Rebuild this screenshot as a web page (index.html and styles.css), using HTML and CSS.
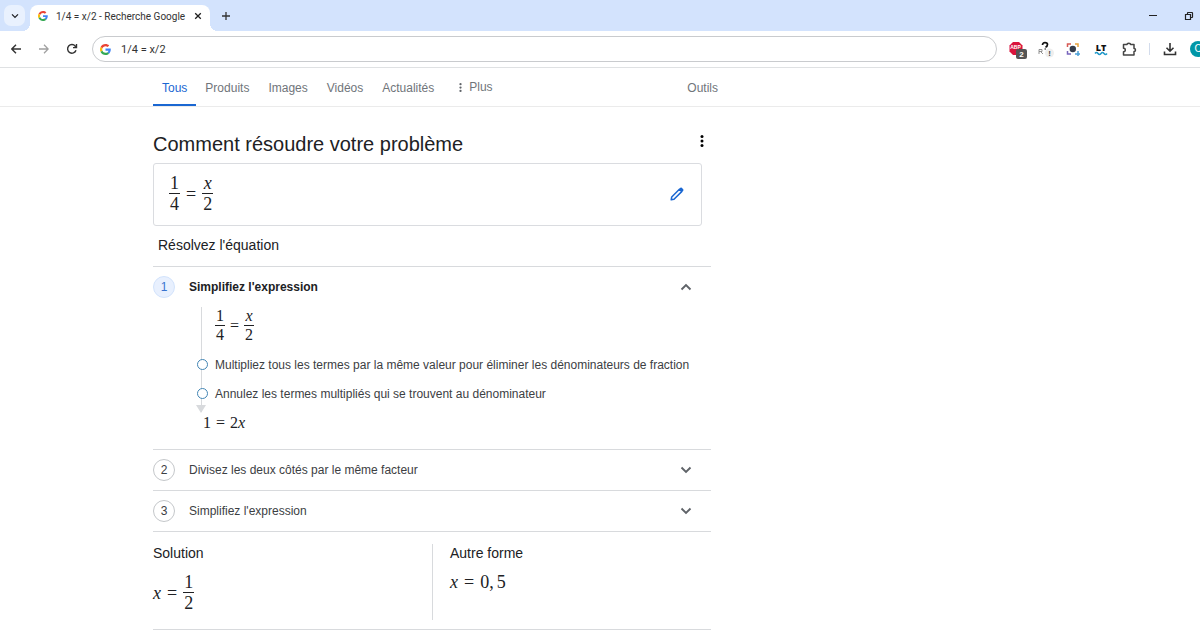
FILE: index.html
```html
<!DOCTYPE html>
<html lang="fr">
<head>
<meta charset="utf-8">
<meta name="viewport" content="width=device-width, initial-scale=1">
<title>1/4 = x/2 - Recherche Google</title>
<link rel="stylesheet" href="styles.css">
</head>
<body>
<svg class="defs" aria-hidden="true">
  <symbol id="google" viewBox="0 0 48 48">
    <path fill="#ea4335" d="M24 9.5c3.5 0 6.700 1.200 9.200 3.600l6.900-6.900C35.900 2.400 30.500 0 24 0 14.600 0 6.500 5.400 2.600 13.200l8 6.200C12.400 13.700 17.700 9.500 24 9.500z"/>
    <path fill="#4285f4" d="M47 24.500c0-1.600-.2-3.100-.4-4.500H24v9h12.900c-.6 3-2.300 5.500-4.800 7.200l7.700 6C44.400 38 47 31.800 47 24.500z"/>
    <path fill="#fbbc05" d="M10.500 28.600c-.5-1.500-.8-3-.8-4.600s.3-3.100.8-4.600l-8-6.200C.9 16.500 0 20.100 0 24s.9 7.500 2.600 10.800z"/>
    <path fill="#34a853" d="M24 48c6.500 0 11.900-2.100 15.900-5.800l-7.700-6c-2.200 1.500-4.900 2.300-8.200 2.300-6.300 0-11.600-4.200-13.500-9.900l-8 6.200C6.500 42.600 14.600 48 24 48z"/>
  </symbol>
  <symbol id="chevron" viewBox="0 0 12 8"><path d="M1.500 1.500L6 6l4.500-4.500" fill="none" stroke="currentColor" stroke-width="1.900"/></symbol>
  <symbol id="dots" viewBox="0 0 4 14"><circle cx="2" cy="2.500" r="1.500"/><circle cx="2" cy="7" r="1.500"/><circle cx="2" cy="11.500" r="1.500"/></symbol>
</svg>

<header class="browser">
  <div class="tabstrip">
    <button class="tab-search" aria-label="Rechercher dans les onglets"><svg width="8" height="6"><use href="#chevron"/></svg></button>
    <div class="tab">
      <svg width="10" height="10"><use href="#google"/></svg>
      <span class="tab-title">1/4 = x/2 - Recherche Google</span>
      <button class="plain" aria-label="Fermer l'onglet"><svg width="8" height="8" viewBox="0 0 8 8"><path d="M1.200 1.200l5.600 5.600M6.800 1.200L1.200 6.800" stroke="#1f1f1f" stroke-width="1.300"/></svg></button>
    </div>
    <button class="plain new-tab" aria-label="Nouvel onglet"><svg width="10" height="10" viewBox="0 0 10 10"><path d="M5 1v8M1 5h8" stroke="#333" stroke-width="1.300"/></svg></button>
    <div class="window-controls">
      <button class="plain" aria-label="Réduire"><svg width="8" height="8" viewBox="0 0 8 8"><path d="M0 4.500h8" stroke="#222"/></svg></button>
      <button class="plain" aria-label="Restaurer"><svg width="10" height="10" viewBox="0 0 10 10"><path d="M1.500 3.500h5v5h-5zM3.500 3V2q0-.5.5-.5h4q.5 0 .5.500v4q0 .5-.5.500H7" fill="none" stroke="#222" stroke-width="1.200"/></svg></button>
    </div>
  </div>
  <div class="toolbar">
    <button class="tool" aria-label="Retour"><svg width="10" height="10" viewBox="0 0 10 10"><path d="M10 5H1M5 .8L.8 5 5 9.200" fill="none" stroke="#333" stroke-width="1.400"/></svg></button>
    <button class="tool" aria-label="Avancer"><svg width="10" height="10" viewBox="0 0 10 10"><path d="M0 5h9M5 .8L9.200 5 5 9.200" fill="none" stroke="#a0a0a0" stroke-width="1.300"/></svg></button>
    <button class="tool" aria-label="Actualiser"><svg width="12" height="12" viewBox="0 0 12 12"><path d="M10 7.200A4.300 4.300 0 1 1 9.300 3.200L10.500 4.600M10.500 1v3.600H7" fill="none" stroke="#333" stroke-width="1.400"/></svg></button>
    <label class="omnibox">
      <svg width="11" height="11"><use href="#google"/></svg>
      <input type="text" value="1/4 = x/2" aria-label="Adresse ou recherche">
    </label>
    <div class="extensions">
      <button class="tool" aria-label="Adblock Plus"><svg width="20" height="20" viewBox="0 0 20 20"><path d="M6 3h6l3.500 3.500v6L12 16H6l-3.500-3.500v-6z" fill="#d9143c"/><text x="8.500" y="10" text-anchor="middle" class="abp">ABP</text><rect x="9" y="10" width="11" height="10" rx="2" fill="#555"/><text x="14.500" y="18" text-anchor="middle" class="badge">2</text></svg></button>
      <button class="tool" aria-label="Extension"><svg width="18" height="18" viewBox="0 0 18 18"><path d="M6.500 5Q6.500 2.700 9 2.700q2.500 0 2.500 1.800T9.500 7.200" fill="none" stroke="#111" stroke-width="1.700"/><path d="M8.500 9h1.500" stroke="#111" stroke-width="1.200"/><path d="M3 9.500h3v2H3zM3 11.500v2.500M5 12l2 2" fill="none" stroke="#777" stroke-width=".8"/><circle cx="13.500" cy="13" r="4.500" fill="#eee"/><text x="13.500" y="16" text-anchor="middle" class="alert">!</text></svg></button>
      <button class="tool" aria-label="Capture"><svg width="14" height="14" viewBox="0 0 14 14" fill="none" stroke-width="1.500"><path d="M1.500 5V2H5" stroke="#d65a54"/><path d="M9 2h3v3" stroke="#e8a13b"/><path d="M1.500 9v3H5" stroke="#7865bd"/><path d="M9 12h5M12 9v5" stroke="#4ba0d8"/><circle cx="6.800" cy="7" r="3.200" fill="#343c4b"/></svg></button>
      <button class="tool" aria-label="LanguageTool"><svg width="14" height="14" viewBox="0 0 14 14"><text x="7" y="8.500" text-anchor="middle" class="lt">LT</text><path d="M1 11.500q1.500-2 3 0t3 0 3 0 3 0" fill="none" stroke="#2299c9" stroke-width="1.500"/></svg></button>
      <button class="tool" aria-label="Extensions"><svg width="15" height="15" viewBox="0 0 15 15"><path d="M1.500 2.500H5Q5 1.300 6.800 1.300t1.800 1.200H12v4Q13.500 6.500 13.500 8T12 9.500v3.500H1.500V9.700Q3.300 9.700 3.300 8T1.500 6.300z" fill="none" stroke="#444" stroke-width="1.500" stroke-linejoin="round"/></svg></button>
      <span class="separator"></span>
      <button class="tool" aria-label="Téléchargements"><svg width="14" height="14" viewBox="0 0 14 14"><path d="M7 1v8M3.500 5.700L7 9.200l3.500-3.500M1.500 9.500v3h11v-3" fill="none" stroke="#333" stroke-width="1.600"/></svg></button>
      <button class="avatar" aria-label="Profil">C</button>
    </div>
  </div>
</header>

<nav class="filters" aria-label="Filtres de recherche">
  <div class="filters-inner">
    <a class="filter active" href="#tous">Tous</a>
    <a class="filter" href="#produits">Produits</a>
    <a class="filter" href="#images">Images</a>
    <a class="filter" href="#videos">Vidéos</a>
    <a class="filter" href="#actualites">Actualités</a>
    <button class="filter more"><svg width="3" height="11" fill="#5f6368"><use href="#dots"/></svg>Plus</button>
    <button class="filter tools">Outils</button>
  </div>
</nav>

<main class="solver">
  <div class="title-row">
    <h1>Comment résoudre votre problème</h1>
    <button class="plain" aria-label="Autres options"><svg width="4" height="14"><use href="#dots"/></svg></button>
  </div>
  <div class="problem">
    <div class="math"><span class="frac"><span>1</span><span>4</span></span><span>=</span><span class="frac"><i>x</i><span>2</span></span></div>
    <button class="plain" aria-label="Modifier"><svg width="14" height="14" viewBox="0 0 14 14"><path d="M1.200 12.800l.5-2.800L9.400 2.300l2.300 2.300L4 12.300z" fill="none" stroke="#1a67d2" stroke-width="1.500" stroke-linejoin="round"/><path d="M8.800 2.300l1.500-1.500q.8-.7 1.500 0l1.400 1.400q.7.700 0 1.500l-1.500 1.500z" fill="#1a67d2"/></svg></button>
  </div>
  <h2 class="task">Résolvez l'équation</h2>

  <section class="step">
    <button class="step-head open" aria-expanded="true"><span class="number">1</span><span class="step-title">Simplifiez l'expression</span><svg class="arrow" width="12" height="8"><use href="#chevron"/></svg></button>
    <div class="step-body">
      <div class="track">
        <div class="math small"><span class="frac"><span>1</span><span>4</span></span><span>=</span><span class="frac"><i>x</i><span>2</span></span></div>
        <p class="hint">Multipliez tous les termes par la même valeur pour éliminer les dénominateurs de fraction</p>
        <p class="hint">Annulez les termes multipliés qui se trouvent au dénominateur</p>
      </div>
      <div class="math small result"><span>1</span><span>=</span><span>2<i>x</i></span></div>
    </div>
  </section>
  <section class="step">
    <button class="step-head" aria-expanded="false"><span class="number">2</span><span class="step-title">Divisez les deux côtés par le même facteur</span><svg class="arrow" width="12" height="8"><use href="#chevron"/></svg></button>
  </section>
  <section class="step">
    <button class="step-head" aria-expanded="false"><span class="number">3</span><span class="step-title">Simplifiez l'expression</span><svg class="arrow" width="12" height="8"><use href="#chevron"/></svg></button>
  </section>

  <div class="answers">
    <section class="answer">
      <h2>Solution</h2>
      <div class="math"><i>x</i><span>=</span><span class="frac"><span>1</span><span>2</span></span></div>
    </section>
    <section class="answer">
      <h2>Autre forme</h2>
      <div class="math"><i>x</i><span>=</span><span class="decimal"><span>0,</span><span>5</span></span></div>
    </section>
  </div>
</main>
</body>
</html>
```
FILE: styles.css
```css
* { box-sizing: border-box; }

body {
  margin: 0;
  background: #fff;
  color: #202124;
  font-family: "Liberation Sans", Arial, sans-serif;
  overflow-x: hidden;
}

button {
  font: inherit;
  color: inherit;
  background: none;
  border: 0;
  padding: 0;
}

h1, h2, p { margin: 0; font-weight: 400; }
svg { display: block; flex: none; }
.defs { position: absolute; width: 0; height: 0; }
.plain { display: flex; }

/* Browser frame */
.browser {
  border-bottom: 1px solid #dfe1e3;
  overflow: hidden;
}

.tabstrip {
  display: flex;
  align-items: center;
  height: 31px;
  padding: 0 6px 0 4px;
  background: #d3e3fd;
}

.tab-search {
  display: grid;
  place-items: center;
  width: 21px;
  height: 21px;
  border-radius: 7px;
  background: #e9f1fe;
}

.tab {
  position: relative;
  display: flex;
  align-items: center;
  align-self: flex-end;
  gap: 8px;
  width: 180px;
  height: 26px;
  margin-left: 5px;
  padding: 0 8px 4px;
  border-radius: 8px 8px 0 0;
  background: #fff;
}

.tab::before,
.tab::after {
  content: "";
  position: absolute;
  bottom: 0;
  width: 8px;
  height: 8px;
}
.tab::before { right: 100%; background: radial-gradient(circle at 0 0, transparent 8px, #fff 8px); }
.tab::after { left: 100%; background: radial-gradient(circle at 100% 0, transparent 8px, #fff 8px); }

.tab-title {
  flex: 1;
  color: #333;
  font-family: Roboto, "Noto Sans", sans-serif;
  font-size: 10px;
  white-space: nowrap;
}

.new-tab { margin-left: 11px; }
.window-controls { display: flex; gap: 27px; margin-left: auto; }

.toolbar {
  display: flex;
  align-items: center;
  height: 36px;
  padding-left: 2px;
}

.tool {
  display: grid;
  place-items: center;
  width: 28px;
  height: 28px;
}

.omnibox {
  display: flex;
  flex: 1;
  align-items: center;
  gap: 10px;
  height: 26px;
  margin: 0 6px;
  padding: 0 7px;
  border: 1px solid #c9cbce;
  border-radius: 13px;
}

.omnibox input {
  flex: 1;
  min-width: 0;
  border: 0;
  padding: 0;
  outline: 0;
  color: #333;
  font: 11px Roboto, "Noto Sans", sans-serif;
}

.extensions { display: flex; align-items: center; margin-right: -6px; }
.separator { width: 1px; height: 12px; margin: 0 6px; background: #d3dcec; }

.avatar {
  width: 16px;
  height: 16px;
  margin-left: 6px;
  border-radius: 50%;
  background: #0097a7;
  color: #fff;
  font-size: 10px;
  line-height: 16px;
}

.abp { font-size: 5px; font-weight: 700; fill: #fff; }
.badge { font-size: 8px; font-weight: 700; fill: #fff; }
.alert { font-size: 8px; font-weight: 700; fill: #444; }
.lt { font-family: "Open Sans", sans-serif; font-size: 9px; font-weight: 800; fill: #111; }

/* Result filters */
.filters { border-bottom: 1px solid #ebebeb; }

.filters-inner {
  display: flex;
  gap: 19px;
  max-width: 718px;
  padding-left: 153px;
}

.filter {
  height: 38px;
  color: #70757a;
  font-size: 12px;
  line-height: 40px;
  text-decoration: none;
}

.filter.active {
  margin-right: -10px;
  padding: 0 9px;
  border-bottom: 2px solid #1a67d2;
  color: #1a67d2;
}

.more { display: flex; align-items: center; gap: 7px; margin-left: 6px; }
.tools { margin-left: auto; }

/* Solver */
.solver {
  max-width: 711px;
  padding: 25px 0 16px 153px;
}

.title-row {
  display: flex;
  justify-content: space-between;
  height: 31px;
  padding: 0 7px 0 0;
}
.title-row .plain { margin-top: 2px; }

h1 { font-size: 20px; line-height: 24px; }

.problem {
  display: flex;
  align-items: center;
  justify-content: space-between;
  height: 63px;
  margin-right: 9px;
  padding: 0 17px 2px 15px;
  border: 1px solid #dadce0;
  border-radius: 3px;
}

.task {
  padding: 9px 5px 11px;
  font-size: 14px;
  line-height: 20px;
}

.math {
  display: flex;
  align-items: center;
  gap: 6px;
  font-family: "Liberation Serif", "Times New Roman", serif;
  font-size: 18px;
  line-height: 20px;
}
.math.small { gap: 5px; font-size: 16px; line-height: 18px; }

.frac { display: flex; flex-direction: column; text-align: center; }
.frac > * { padding: 0 1px; }
.frac > :first-child { border-bottom: 1px solid #202124; }
.decimal { display: flex; gap: 3px; }

.step { border-top: 1px solid #d8dadd; }

.step-head {
  display: flex;
  align-items: center;
  gap: 14px;
  width: 100%;
  height: 40px;
  padding-right: 19px;
  color: #3c4043;
  font-size: 12px;
  text-align: left;
}

.number {
  width: 22px;
  height: 22px;
  border: 1px solid #c4c7ca;
  border-radius: 50%;
  line-height: 20px;
  text-align: center;
}

.arrow { margin-left: auto; color: #5f6368; }

.open .number { border-color: #d2e3fc; background: #e8f0fe; color: #3973cf; }
.open .step-title { color: #202124; font-weight: 700; }
.open .arrow { transform: rotate(180deg); }

.step-body { padding: 4px 0 17px 48px; }

.track {
  border-left: 1px solid #d8dadd;
  padding: 0 0 10px 13px;
  position: relative;
}
.track .math { margin-top: -4px; }

.track::after {
  content: "";
  position: absolute;
  bottom: -1px;
  left: -6px;
  border: 5px solid transparent;
  border-top: 8px solid #d8dadd;
  border-bottom: 0;
}

.hint {
  position: relative;
  padding-top: 14px;
  color: #3c4043;
  font-size: 12px;
  line-height: 15px;
}

.hint::before {
  content: "";
  position: absolute;
  bottom: 3px;
  left: -18px;
  width: 9px;
  height: 9px;
  border: 1px solid #4285b4;
  border-radius: 50%;
  background: #fff;
}

.result { padding: 2px 0 0 2px; }

.answers {
  display: grid;
  grid-template-columns: 1fr 1fr;
  padding: 12px 0 9px;
  border-top: 1px solid #d8dadd;
  border-bottom: 1px solid #d8dadd;
}

.answer { min-height: 76px; }
.answer + .answer { padding-left: 17px; border-left: 1px solid #d8dadd; }
.answer h2 { padding-bottom: 10px; font-size: 14px; line-height: 18px; }
```
